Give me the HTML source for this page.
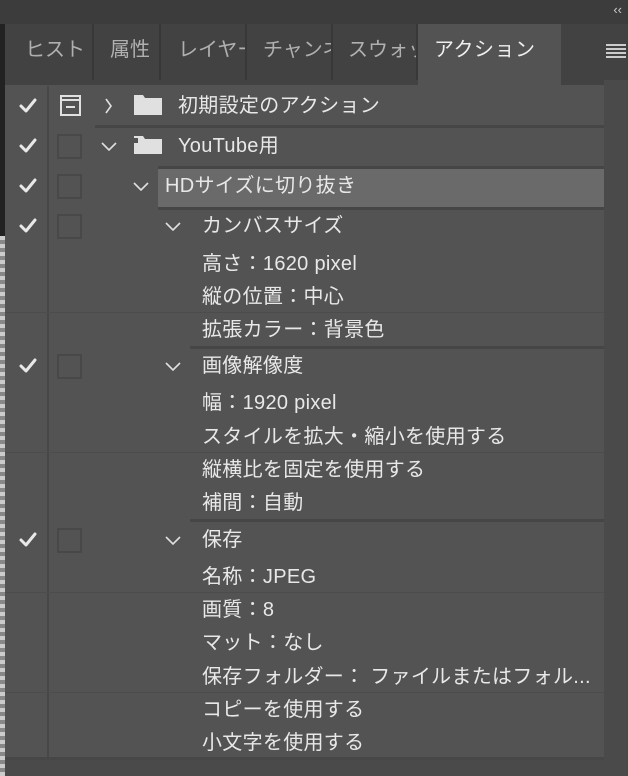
<!DOCTYPE html>
<html><head><meta charset="utf-8"><style>
*{margin:0;padding:0;box-sizing:border-box}
body{width:628px;height:776px;background:#3c3c3c;overflow:hidden;position:relative;font-family:"Liberation Sans","Noto Sans CJK JP",sans-serif;color:#e6e6e6}
.a{position:absolute}
.tab{position:absolute;top:24px;height:56px;background:#424242;border-right:2px solid #383838;font-size:20px;color:#b0b0b0;line-height:52px;overflow:hidden;white-space:nowrap}
.t{position:absolute;font-size:20px;letter-spacing:0.3px;white-space:nowrap;line-height:24px;color:#e8e8e8}
.ln{position:absolute;height:3px;background:#464646}
.fl{position:absolute;left:5px;right:24px;height:1px;background:#4c4c4c}
</style></head><body>
<div class="a" style="right:6px;top:2px;font-size:13px;color:#ccc">&lsaquo;&lsaquo;</div>
<div class="a" style="left:0;top:24px;width:5px;height:212px;background:#222"></div>
<div class="a" style="left:0;top:236px;width:5px;height:540px;background:repeating-linear-gradient(#ccc 0 4px,#888 4px 8px)"></div>
<div class="tab" style="left:5px;width:89px;padding-left:20px">ヒスト</div>
<div class="tab" style="left:94px;width:67px;padding-left:16px">属性</div>
<div class="tab" style="left:161px;width:86px;padding-left:17px">レイヤー</div>
<div class="tab" style="left:247px;width:86px;padding-left:16px">チャンネル</div>
<div class="tab" style="left:333px;width:85px;padding-left:15px">スウォッチ</div>
<div class="a" style="left:418px;top:24px;width:143px;height:58px;background:#535353;font-size:20px;line-height:52px;padding-left:16px;color:#eee;letter-spacing:0.5px">アクション</div>
<div class="tab" style="left:561px;width:67px;border:none"></div>
<div class="a" style="left:606px;top:44px;width:20px;height:14px;background:repeating-linear-gradient(#ccc 0 2px,transparent 2px 4px)"></div>
<div class="a" style="left:5px;top:80px;width:599px;height:680px;background:#535353"></div>
<div class="a" style="left:561px;top:80px;width:43px;height:5px;background:#424242"></div>
<div class="a" style="left:5px;top:80px;width:413px;height:5px;background:#424242"></div>
<div class="a" style="left:604px;top:80px;width:24px;height:680px;background:#4a4a4a"></div>
<div class="a" style="left:5px;top:760px;width:623px;height:16px;background:#4a4a4a"></div>
<div class="a" style="left:5px;top:757px;width:599px;height:3px;background:#474747"></div>
<div class="a" style="left:47px;top:86px;width:2px;height:671px;background:#474747"></div>
<div class="a" style="left:158px;top:169px;width:446px;height:38px;background:#6a6a6a"></div>
<div class="ln" style="left:95px;top:125px;width:509px"></div>
<div class="ln" style="left:158px;top:166px;width:446px"></div>
<div class="ln" style="left:158px;top:207px;width:446px"></div>
<div class="ln" style="left:190px;top:346px;width:414px"></div>
<div class="ln" style="left:190px;top:519px;width:414px"></div>
<div class="fl" style="top:312px"></div>
<div class="fl" style="top:452px"></div>
<div class="fl" style="top:592px"></div>
<div class="fl" style="top:692px"></div>
<svg class="a" style="left:0;top:0" width="628" height="776">
<g fill="none" stroke="#e8e8e8" stroke-width="3" stroke-linecap="round" stroke-linejoin="round">
<path d="M21 106l5 5 9-11"/><path d="M21 146l5 5 9-11"/><path d="M21 186l5 5 9-11"/><path d="M21 226l5 5 9-11"/><path d="M21 366l5 5 9-11"/><path d="M21 540l5 5 9-11"/>
</g>
<g fill="none" stroke="#484848" stroke-width="2"><rect x="58" y="135" width="23" height="23"/><rect x="58" y="175" width="23" height="23"/><rect x="58" y="215" width="23" height="23"/><rect x="58" y="355" width="23" height="23"/><rect x="58" y="529" width="23" height="23"/></g>
<rect x="61" y="96" width="19" height="19" fill="none" stroke="#e0e0e0" stroke-width="2"/><path d="M61 100h19M66 107h9" stroke="#e0e0e0" stroke-width="2"/>
<g fill="none" stroke="#e0e0e0" stroke-width="1.6">
<path d="M106 99l5 7-5 7"/><path d="M102 143l7 7 7-7"/><path d="M134 183l7 7 7-7"/><path d="M166 223l7 7 7-7"/><path d="M166 363l7 7 7-7"/><path d="M166 537l7 7 7-7"/>
</g>
<path d="M134 95h9l2 3h17v17h-28z" fill="#e0e0e0"/>
<path d="M134 136h9l2 3h17v4h-24v-5h-4zM134 143h28v11h-28z" fill="#e0e0e0"/>
</svg>
<div class="t" style="left:178px;top:94px">初期設定のアクション</div>
<div class="t" style="left:178px;top:134px">YouTube用</div>
<div class="t" style="left:165px;top:174px">HDサイズに切り抜き</div>
<div class="t" style="left:202px;top:214px">カンバスサイズ</div>
<div class="t" style="left:202px;top:252px">高さ：1620 pixel</div>
<div class="t" style="left:202px;top:285px">縦の位置：中心</div>
<div class="t" style="left:202px;top:318px">拡張カラー：背景色</div>
<div class="t" style="left:202px;top:354px">画像解像度</div>
<div class="t" style="left:202px;top:391px">幅：1920 pixel</div>
<div class="t" style="left:202px;top:425px">スタイルを拡大・縮小を使用する</div>
<div class="t" style="left:202px;top:458px">縦横比を固定を使用する</div>
<div class="t" style="left:202px;top:491px">補間：自動</div>
<div class="t" style="left:202px;top:528px">保存</div>
<div class="t" style="left:202px;top:565px">名称：JPEG</div>
<div class="t" style="left:202px;top:598px">画質：8</div>
<div class="t" style="left:202px;top:631px">マット：なし</div>
<div class="t" style="left:202px;top:665px">保存フォルダー： ファイルまたはフォル...</div>
<div class="t" style="left:202px;top:698px">コピーを使用する</div>
<div class="t" style="left:202px;top:731px">小文字を使用する</div>
</body></html>
